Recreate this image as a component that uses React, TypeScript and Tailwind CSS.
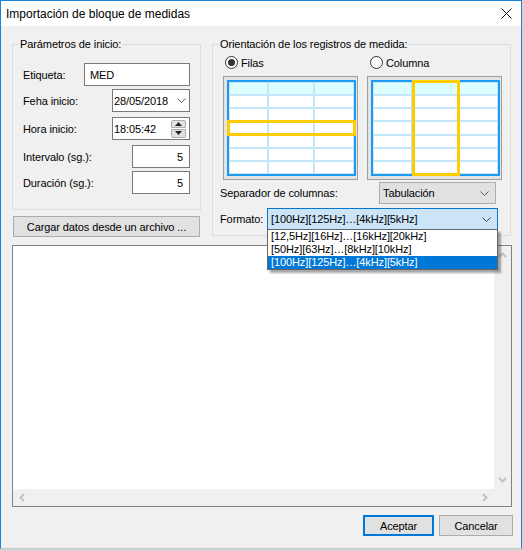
import React from "react";

const Chevron = ({ color = "#606060" }: { color?: string }) => (
  <svg width="9" height="5" viewBox="0 0 9 5">
    <path d="M0.5 0.5 L4.5 4.5 L8.5 0.5" fill="none" stroke={color} strokeWidth="1" />
  </svg>
);

// flechas desactivadas de las barras de desplazamiento
const ScrollArrow = ({ dir }: { dir: "up" | "down" | "left" | "right" }) => {
  const d = {
    up: "M1 5 L4.5 1.5 L8 5",
    down: "M1 1 L4.5 4.5 L8 1",
    left: "M5 1 L1.5 4.5 L5 8",
    right: "M1 1 L4.5 4.5 L1 8",
  }[dir];
  const vertical = dir === "up" || dir === "down";
  return (
    <svg width={vertical ? 9 : 6} height={vertical ? 6 : 9} viewBox={vertical ? "0 0 9 6" : "0 0 6 9"}>
      <path d={d} fill="none" stroke="#c2c2c2" strokeWidth="2" />
    </svg>
  );
};

const Thumb = ({ mode }: { mode: "row" | "col" }) => (
  <div className="w-[135px] h-[104px] border border-[#a0a0a0] bg-[#e3e3e3] pt-[3px] pl-[3px]">
    <div className="relative w-[129px] h-[96px] border-2 border-[#1e9bf0] bg-[#c4e6fb] p-[1px] grid grid-cols-[38fr_44fr_39fr] grid-rows-7 gap-[2px]">
      {Array.from({ length: 21 }).map((_, i) => (
        <div key={i} className={i < 3 ? "bg-[#dbffff]" : "bg-white"} />
      ))}
      {mode === "row" ? (
        <div className="absolute left-[-2px] top-[38px] w-[129px] h-[16px] border-[3px] border-[#ffcc00]" />
      ) : (
        <div className="absolute left-[39px] top-[-2px] w-[48px] h-[96px] border-[3px] border-[#ffcc00]" />
      )}
    </div>
  </div>
);

const Radio = ({ checked, label }: { checked: boolean; label: string }) => (
  <div className="flex items-center h-[13px]">
    <div className="w-[13px] h-[13px] rounded-full border border-[#333333] bg-white flex items-center justify-center">
      {checked && <div className="w-[7px] h-[7px] rounded-full bg-[#333333]" />}
    </div>
    <span className="ml-[3px]">{label}</span>
  </div>
);

export default function App() {
  return (
    <div className="w-[523px] h-[551px] bg-[#d4d4d4] font-['Liberation_Sans',Arial,sans-serif] text-[11px] tracking-[-0.1px] text-black leading-[16px]">
      <div className="w-[522px] h-[549px] border border-[#1883d7] border-b-[#c8c8c8] flex flex-col bg-white">
        {/* barra de título */}
        <div className="h-[25px] bg-white flex items-center justify-between pl-[5px] pr-[9px]">
          <span className="text-[12px] tracking-normal">Importación de bloque de medidas</span>
          <svg width="11" height="11" viewBox="0 0 11 11">
            <path d="M0.5 0.5 L10.5 10.5 M10.5 0.5 L0.5 10.5" stroke="#111" strokeWidth="1" />
          </svg>
        </div>

        {/* cuerpo */}
        <div className="flex-1 bg-[#f0f0f0] pl-[11px] pr-[8px] pt-[10px] flex flex-col">
          <div className="flex items-start gap-[11px]">
            {/* columna izquierda */}
            <div className="flex flex-col">
              <fieldset className="w-[189px] h-[174px] border border-[#dcdcdc]">
                <legend className="ml-[6px] px-[1px] leading-[16px]">Parámetros de inicio:</legend>
                <div className="pl-[10px] pr-[10px] pt-[11px] flex flex-col">
                  <div className="flex items-center justify-between h-[23px]">
                    <span>Etiqueta:</span>
                    <div className="w-[106px] h-[23px] border border-[#7a7a7a] bg-white pl-[5px] flex items-center">MED</div>
                  </div>
                  <div className="flex items-center justify-between h-[23px] mt-[3px]">
                    <span>Feha inicio:</span>
                    <div className="w-[78px] h-[23px] border border-[#7a7a7a] bg-white pl-[1px] pr-[3px] flex items-center justify-between">
                      <span>28/05/2018</span>
                      <Chevron />
                    </div>
                  </div>
                  <div className="flex items-center justify-between h-[23px] mt-[5px]">
                    <span>Hora inicio:</span>
                    <div className="w-[78px] h-[23px] border border-[#7a7a7a] bg-white pl-[1px] pr-[3px] flex items-center justify-between">
                      <span>18:05:42</span>
                      <div className="w-[15px] h-[18px] flex flex-col gap-[1px]">
                        <div className="flex-1 bg-[#e1e1e1] border border-[#adadad] rounded-t-[2px] flex items-center justify-center">
                          <svg width="7" height="4" viewBox="0 0 7 4"><path d="M0 4 L3.5 0 L7 4 Z" fill="#222" /></svg>
                        </div>
                        <div className="flex-1 bg-[#e1e1e1] border border-[#adadad] rounded-b-[2px] flex items-center justify-center">
                          <svg width="7" height="4" viewBox="0 0 7 4"><path d="M0 0 L3.5 4 L7 0 Z" fill="#222" /></svg>
                        </div>
                      </div>
                    </div>
                  </div>
                  <div className="flex items-center justify-between h-[23px] mt-[5px]">
                    <span>Intervalo (sg.):</span>
                    <div className="w-[58px] h-[23px] border border-[#7a7a7a] bg-white pr-[6px] flex items-center justify-end">5</div>
                  </div>
                  <div className="flex items-center justify-between h-[23px] mt-[3px]">
                    <span>Duración (sg.):</span>
                    <div className="w-[58px] h-[23px] border border-[#7a7a7a] bg-white pr-[6px] flex items-center justify-end">5</div>
                  </div>
                </div>
              </fieldset>
              <button className="ml-[1px] mt-[6px] w-[187px] h-[21px] bg-[#e1e1e1] border border-[#adadad] flex items-center justify-center">
                Cargar datos desde un archivo ...
              </button>
            </div>

            {/* columna derecha */}
            <fieldset className="w-[299px] h-[200px] border border-[#dcdcdc]">
              <legend className="ml-[6px] px-[1px] leading-[16px]">Orientación de los registros de medida:</legend>
              <div className="flex flex-col">
                <div className="flex items-center mt-[4px] pl-[12px]">
                  <div className="w-[145px]">
                    <Radio checked label="Filas" />
                  </div>
                  <Radio checked={false} label="Columna" />
                </div>
                <div className="flex gap-[9px] mt-[7px] pl-[10px]">
                  <Thumb mode="row" />
                  <Thumb mode="col" />
                </div>
                <div className="flex items-center justify-between mt-[2px] pl-[7px] pr-[14px]">
                  <span>Separador de columnas:</span>
                  <div className="w-[117px] h-[22px] bg-[#e1e1e1] border border-[#adadad] pl-[3px] pr-[6px] flex items-center justify-between">
                    <span>Tabulación</span>
                    <Chevron />
                  </div>
                </div>
                <div className="flex items-center justify-between mt-[4px] pl-[7px] pr-[12px]">
                  <span>Formato:</span>
                  <div className="relative w-[231px] h-[22px] bg-[#cce4f7] border border-[#0078d7] pl-[3px] pr-[6px] flex items-center justify-between">
                    <span>[100Hz][125Hz]…[4kHz][5kHz]</span>
                    <Chevron color="#404040" />
                    {/* lista desplegada */}
                    <div className="absolute left-[-1px] top-[20px] w-[231px] border border-[#646464] bg-white z-10 shadow-[3px_3px_2px_rgba(0,0,0,0.35)] flex flex-col leading-[13px]">
                      <div className="h-[13px] pl-[3px]">[12,5Hz][16Hz]…[16kHz][20kHz]</div>
                      <div className="h-[13px] pl-[3px]">[50Hz][63Hz]…[8kHz][10kHz]</div>
                      <div className="h-[13px] pl-[3px] bg-[#0078d7] text-white">[100Hz][125Hz]…[4kHz][5kHz]</div>
                    </div>
                  </div>
                </div>
              </div>
            </fieldset>
          </div>

          {/* área de datos */}
          <div className="mt-[8px] w-[500px] h-[262px] border border-[#828282] bg-white flex flex-col">
            <div className="flex-1 flex">
              <div className="flex-1" />
              <div className="w-[17px] bg-[#f0f0f0] flex flex-col items-center justify-between py-[6px]">
                <ScrollArrow dir="up" />
                <ScrollArrow dir="down" />
              </div>
            </div>
            <div className="h-[17px] flex">
              <div className="flex-1 bg-[#f0f0f0] flex items-center justify-between px-[6px]">
                <ScrollArrow dir="left" />
                <ScrollArrow dir="right" />
              </div>
              <div className="w-[17px] bg-[#f0f0f0]" />
            </div>
          </div>

          {/* botones */}
          <div className="mt-[8px] flex justify-end gap-[5px]">
            <button className="w-[71px] h-[21px] bg-[#e1e1e1] border-2 border-[#0078d7] flex items-center justify-center">Aceptar</button>
            <button className="w-[74px] h-[21px] bg-[#e1e1e1] border border-[#adadad] flex items-center justify-center">Cancelar</button>
          </div>
        </div>
      </div>
    </div>
  );
}
